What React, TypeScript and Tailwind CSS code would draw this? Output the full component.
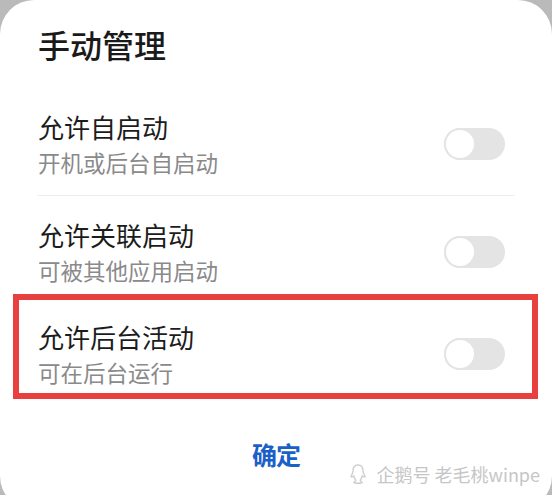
import React from "react";

interface PermissionItem {
  id: string;
  title: string;
  description: string;
  highlighted?: boolean;
}

const items: PermissionItem[] = [
  { id: "auto", title: "允许自启动", description: "开机或后台自启动" },
  { id: "linked", title: "允许关联启动", description: "可被其他应用启动" },
  { id: "background", title: "允许后台活动", description: "可在后台运行", highlighted: true },
];

const font = { fontFamily: '"Noto Sans CJK SC", "Noto Sans", sans-serif' };

const Toggle = () => (
  <div className="relative w-[61px] h-[32px] rounded-full bg-[#e4e4e4] shrink-0">
    <div className="absolute left-0 top-0 w-[32px] h-[32px] rounded-full bg-white border-2 border-[#e4e4e4]" />
  </div>
);

const Row = ({ item }: { item: PermissionItem }) => (
  <div className="relative flex items-center justify-between pr-[9px]">
    {/* Annotation box */}
    {item.highlighted && (
      <div className="absolute -left-[25px] -right-[24px] -top-[27px] -bottom-[12px] border-[6px] border-[#e8403f]" />
    )}
    <div className="flex flex-col">
      <span className="text-[26px] leading-[32px] text-[#1c1c1c]">{item.title}</span>
      <span className="mt-[4px] text-[22.5px] leading-[30px] text-[#8a8a8a]">{item.description}</span>
    </div>
    <Toggle />
  </div>
);

export default function App() {
  return (
    <div className="w-[552px] h-[495px] overflow-hidden bg-[#bababa]" style={font}>
      <div className="relative h-[510px] bg-white rounded-[34px] px-[38px] pt-[26px]">
        <h1 className="text-[32px] leading-[36px] font-medium text-[#1a1a1a]">手动管理</h1>

        <div className="mt-[49px]">
          <Row item={items[0]} />
        </div>
        <div className="mt-[18px] h-px bg-[#ececec]" />
        <div className="mt-[23px]">
          <Row item={items[1]} />
        </div>
        <div className="mt-[36px]">
          <Row item={items[2]} />
        </div>

        <div className="mt-[51px] flex justify-center">
          <span className="text-[25px] leading-[32px] font-bold text-[#1b5fc9] tracking-[-1px]">确定</span>
        </div>

        {/* Watermark */}
        <div className="absolute right-[12px] top-[462px] flex items-center gap-[10px] text-[#c6c6c6]">
          <svg width="16" height="22" viewBox="0 0 16 22" fill="none" stroke="#cfcfcf" strokeWidth="1.4">
            <path d="M8 2c-3 0-5 2.4-5 6 0 2-1 3.5-2 5.5 1 .5 2 .2 2.8-.5.5 2 1.2 3.5 2 4.2L4 19.5c2 .8 6 .8 8 0l-1.8-2.3c.8-.7 1.5-2.2 2-4.2.8.7 1.8 1 2.8.5-1-2-2-3.5-2-5.5 0-3.6-2-6-5-6z" />
          </svg>
          <span className="text-[18px] leading-[24px]">企鹅号 老毛桃winpe</span>
        </div>
      </div>
    </div>
  );
}
